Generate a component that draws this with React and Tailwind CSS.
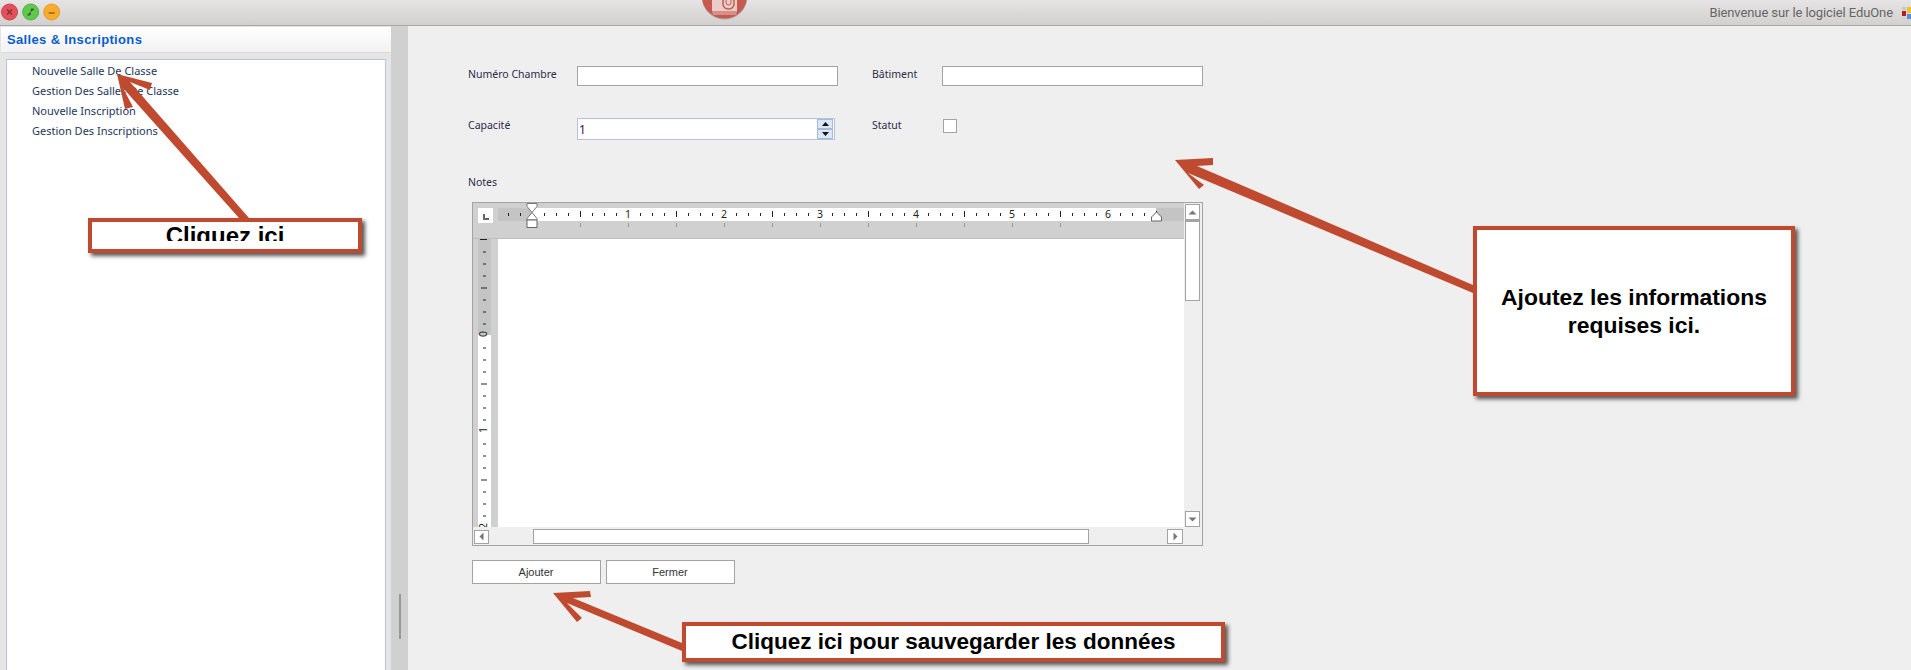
import React from "react";

const menuItems = [
  "Nouvelle Salle De Classe",
  "Gestion Des Salles De Classe",
  "Nouvelle Inscription",
  "Gestion Des Inscriptions",
];

const range = (n) => Array.from({ length: n }, (_, i) => i);

const WindowButtons = () => (
  <svg width="64" height="24" viewBox="0 0 64 24" className="ml-px">
    <circle cx="8.5" cy="11" r="8" fill="#e5505a" stroke="#c9474e" />
    <path d="M6 8.5l5 5M11 8.5l-5 5" stroke="#7a3035" strokeWidth="1.3" />
    <circle cx="29.7" cy="11" r="8" fill="#5ec94b" stroke="#52b141" />
    <path d="M26.7 14l2.5-2.5v2.5zM32.7 8l-2.5 2.5v-2.5z" fill="#3f5a3a" stroke="#3f5a3a" />
    <circle cx="50.7" cy="11" r="8" fill="#f8ab2d" stroke="#e0a035" />
    <path d="M47.7 12h6" stroke="#7a5a20" strokeWidth="1.3" />
  </svg>
);

const CameraButton = () => (
  <svg width="60" height="25" viewBox="694 0 60 25" className="absolute left-[694px] top-0">
    <circle cx="724.5" cy="-3" r="22.8" fill="#888" opacity="0.45" />
    <circle cx="724.5" cy="-4" r="22.6" fill="#c65a50" />
    <path d="M712 0h25v11h-25z" fill="#e9cdc9" />
    <path d="M712 11h25l-1 4h-23z" fill="#d98f88" />
    <rect x="723" y="-4" width="11" height="13" rx="5" fill="none" stroke="#c65a50" strokeWidth="1.5" />
    <rect x="726" y="-4" width="5" height="9" rx="2.5" fill="none" stroke="#c65a50" />
  </svg>
);

const TrayIcon = () => (
  <svg width="9" height="12" viewBox="0 0 9 12" className="shrink-0">
    <rect width="4" height="3" fill="#c8c8c8" />
    <rect y="4" width="4" height="5" fill="#b81c1c" />
    <rect y="10" width="4" height="2" fill="#d0d0d0" />
    <rect x="5" width="4" height="6" fill="#f0c030" />
    <rect x="5" y="7" width="4" height="5" fill="#5590e0" />
  </svg>
);

const TopRuler = () => (
  <svg width="711" height="36" viewBox="0 0 711 36" className="block">
    <rect x="5" y="5" width="15" height="15" fill="#fff" />
    <path d="M10 11h2v4h4v2h-6z" fill="#666" />
    <rect x="25" y="5" width="34" height="13" fill="#c4c4c4" />
    <rect x="59" y="5" width="624" height="13" fill="#fff" />
    <rect x="683" y="5" width="28" height="13" fill="#c4c4c4" />
    {range(55).map((i) => {
      const x = 35 + i * 12;
      if (x === 59 || (x - 59) % 96 === 0) return null;
      const major = (x - 59) % 48 === 0;
      return <rect key={i} x={x} y={major ? 8 : 10} width="1" height={major ? 6 : 3} fill="#222" />;
    })}
    {range(11).map((i) => (
      <rect key={i} x={107 + i * 48} y="20" width="1" height="4" fill="#999" />
    ))}
    {range(6).map((i) => (
      <text key={i} x={155 + i * 96} y="15" textAnchor="middle" fontSize="10.5" fill="#222" fontFamily="Noto Sans, sans-serif">
        {i + 1}
      </text>
    ))}
    <path d="M54 .5h10v3l-5 6-5-6zM59 9.5l5 6v1.5h-10v-1.5z" fill="#fff" stroke="#777" />
    <rect x="54" y="17" width="10" height="7.5" fill="#fff" stroke="#666" />
    <path d="M678.5 18v-4l5-5 5 5v4z" fill="#fff" stroke="#666" />
  </svg>
);

const SideRuler = () => (
  <svg width="25" height="289" viewBox="0 0 25 289" className="block shrink-0">
    <rect width="25" height="289" fill="#d0d0d0" />
    <rect x="5" width="13" height="96" fill="#c4c4c4" />
    <rect x="5" y="96" width="13" height="193" fill="#fff" />
    <rect x="7" y="0" width="7" height="1" fill="#222" />
    {range(24).map((i) => {
      const y = i * 12 + 0.5;
      if (i % 8 === 0) return null;
      const major = i % 4 === 0;
      return <rect key={i} x={major ? 8 : 10} y={y} width={major ? 6 : 3} height="1" fill="#222" />;
    })}
    {["0", "1", "2"].map((label, i) => (
      <text
        key={i}
        transform={`translate(13.5 ${i * 96 + 95}) rotate(-90)`}
        textAnchor="middle"
        fontSize="10.5"
        fill="#222"
        fontFamily="Noto Sans, sans-serif"
      >
        {label}
      </text>
    ))}
  </svg>
);

const ScrollArrow = ({ d }) => (
  <svg width="9" height="9" viewBox="0 0 9 9">
    <path d={d} fill="#777" />
  </svg>
);

const Editor = () => (
  <div className="ml-1 mt-3 flex h-[344px] w-[731px] flex-col border border-[#a3a3a3] bg-[#efefef]">
    <div className="flex h-[325px]">
      <div className="flex w-[711px] flex-col">
        <div className="h-[36px] border-b border-[#bdbdbd] bg-[#d0d0d0]">
          <TopRuler />
        </div>
        <div className="flex h-[288px] overflow-hidden">
          <SideRuler />
          <div className="flex-1 bg-white" />
        </div>
      </div>
      <div className="flex w-[18px] flex-col pl-px pt-px">
        <div className="flex h-[16px] w-[15px] items-center justify-center border border-[#a3a3a3] bg-white">
          <ScrollArrow d="M0.5 6.5l4-4 4 4z" />
        </div>
        <div className="h-[81px] w-[15px] border border-t-2 border-[#a3a3a3] bg-white" />
        <div className="mt-auto mb-px flex h-[16px] w-[15px] items-center justify-center border border-[#a3a3a3] bg-white">
          <ScrollArrow d="M0.5 2.5h8l-4 4z" />
        </div>
      </div>
    </div>
    <div className="flex h-[17px] items-center pl-px">
      <div className="flex h-[14px] w-[15px] items-center justify-center border border-[#a3a3a3] bg-white">
        <ScrollArrow d="M6.5 0.5v8l-4-4z" />
      </div>
      <div className="ml-[44px] h-[15px] w-[556px] border border-[#a3a3a3] bg-white" />
      <div className="ml-[78px] flex h-[15px] w-[16px] items-center justify-center border border-[#a3a3a3] bg-white">
        <ScrollArrow d="M2.5 0.5v8l4-4z" />
      </div>
    </div>
  </div>
);

const Spinner = () => (
  <div className="flex h-[22px] w-[258px] items-center justify-between border border-[#b4c3dc] bg-white pl-px pr-[1px]">
    <span className="mt-px text-[12px] text-[#3a1050]">1</span>
    <div className="flex flex-col">
      <div className="flex h-[10px] w-[16px] items-center justify-center border border-[#a9b9d4] bg-[#dbe6f7]">
        <svg width="7" height="4" viewBox="0 0 7 4"><path d="M0 4l3.5-4 3.5 4z" fill="#111" /></svg>
      </div>
      <div className="flex h-[10px] w-[16px] items-center justify-center border border-[#a9b9d4] bg-[#dbe6f7]">
        <svg width="7" height="4" viewBox="0 0 7 4"><path d="M0 0h7l-3.5 4z" fill="#111" /></svg>
      </div>
    </div>
  </div>
);

const Arrows = () => (
  <svg width="1911" height="670" viewBox="0 0 1911 670" className="pointer-events-none absolute left-0 top-0">
    <g fill="#bf4a2f">
      <path d="M117 74l35 9-2 7-20-8 119 136h-10L123 88l10 19-8 2z" />
      <path d="M1175 160l38-2v7l-16 1 276 119v8l-285-120 16 12-5 4z" />
      <path d="M553 593l37-2 1 6-18 1 109 45v8l-115-48 15 15-5 4z" />
    </g>
  </svg>
);

const callout =
  "absolute flex flex-col items-center border-[4px] border-[#c04a30] bg-white font-['Liberation_Sans',Arial,sans-serif] font-bold text-black shadow-[3px_3px_4px_#555]";

export default function App() {
  return (
    <div className="relative h-[670px] w-[1911px] overflow-hidden bg-[#efefef] font-['Noto_Sans',sans-serif] text-[11px] text-[#2b2b4a]">
      {/* barre du haut */}
      <header className="relative flex h-[26px] items-center justify-between border-b border-[#a8a8a8] bg-gradient-to-b from-[#e6e4e4] to-[#d3d1cf]">
        <WindowButtons />
        <CameraButton />
        <div className="flex items-center gap-[9px]">
          <span className="font-['Roboto',sans-serif] text-[13px] tracking-[-0.1px] text-[#666]">Bienvenue sur le logiciel EduOne</span>
          <TrayIcon />
        </div>
      </header>

      <div className="flex h-[644px]">
        {/* menu gauche */}
        <aside className="flex w-[391px] flex-col bg-[#e5e5e5] pl-px pt-px">
          <div className="flex h-[26px] items-center border-b border-[#dcdcdc] bg-gradient-to-b from-white to-[#f2f2f2] pl-[6px] font-['Liberation_Sans',sans-serif] text-[13px] font-bold tracking-[0.35px] text-[#0a5cd0]">
            Salles &amp; Inscriptions
          </div>
          <ul className="ml-[5px] mt-[6px] w-[380px] flex-1 border border-b-0 border-[#b5c3dc] bg-white pl-[25px] pt-px text-[#24365c]">
            {menuItems.map((item) => (
              <li key={item} className="flex h-[20px] items-center">
                {item}
              </li>
            ))}
          </ul>
        </aside>

        {/* séparateur */}
        <div className="flex w-[17px] items-center justify-center bg-[#d0d0d0]">
          <div className="mt-[536px] h-[45px] w-[2px] bg-[#999]" />
        </div>

        {/* formulaire */}
        <main className="flex-1 pl-[60px] pt-[40px]">
          <div className="flex items-start">
            <label className="-mt-[1px] w-[109px] text-[10.5px] leading-[18px]">Numéro Chambre</label>
            <input readOnly className="h-[20px] w-[261px] border border-[#a3a3a3] bg-white" />
            <label className="-mt-[1px] ml-[34px] w-[70px] text-[10.5px] leading-[18px]">Bâtiment</label>
            <input readOnly className="h-[20px] w-[261px] border border-[#a3a3a3] bg-white" />
          </div>
          <div className="mt-[32px] flex items-start">
            <label className="-mt-[2px] w-[109px] text-[10.5px] leading-[18px]">Capacité</label>
            <Spinner />
            <label className="-mt-[2px] ml-[37px] w-[71px] text-[10.5px] leading-[18px]">Statut</label>
            <div className="mt-px h-[14px] w-[14px] border border-[#a3a3a3] bg-white" />
          </div>
          <div className="mt-[34px] text-[10.5px] leading-[16px]">Notes</div>
          <Editor />
          <div className="ml-1 mt-[14px] flex gap-[5px] font-['Liberation_Sans',sans-serif] text-[11px] text-[#333]">
            <button className="h-[24px] w-[129px] border border-[#a3a3a3] bg-white pr-px">Ajouter</button>
            <button className="h-[24px] w-[129px] border border-[#a3a3a3] bg-white pr-px">Fermer</button>
          </div>
        </main>
      </div>

      {/* annotations */}
      <Arrows />
      <div className={`${callout} left-[88px] top-[218px] h-[35px] w-[274px] text-[24px]`}>
        <div className="mt-[2px] h-[17px] overflow-hidden leading-[24px]">Cliquez ici</div>
      </div>
      <div className={`${callout} left-[1473px] top-[226px] h-[170px] w-[322px] justify-center text-[22.9px] leading-[28px]`}>
        <div className="mt-[-1px] text-center">
          Ajoutez les informations
          <br />
          requises ici.
        </div>
      </div>
      <div className={`${callout} left-[682px] top-[622px] h-[40px] w-[543px] justify-center text-[22.5px]`}>
        Cliquez ici pour sauvegarder les données
      </div>
    </div>
  );
}
